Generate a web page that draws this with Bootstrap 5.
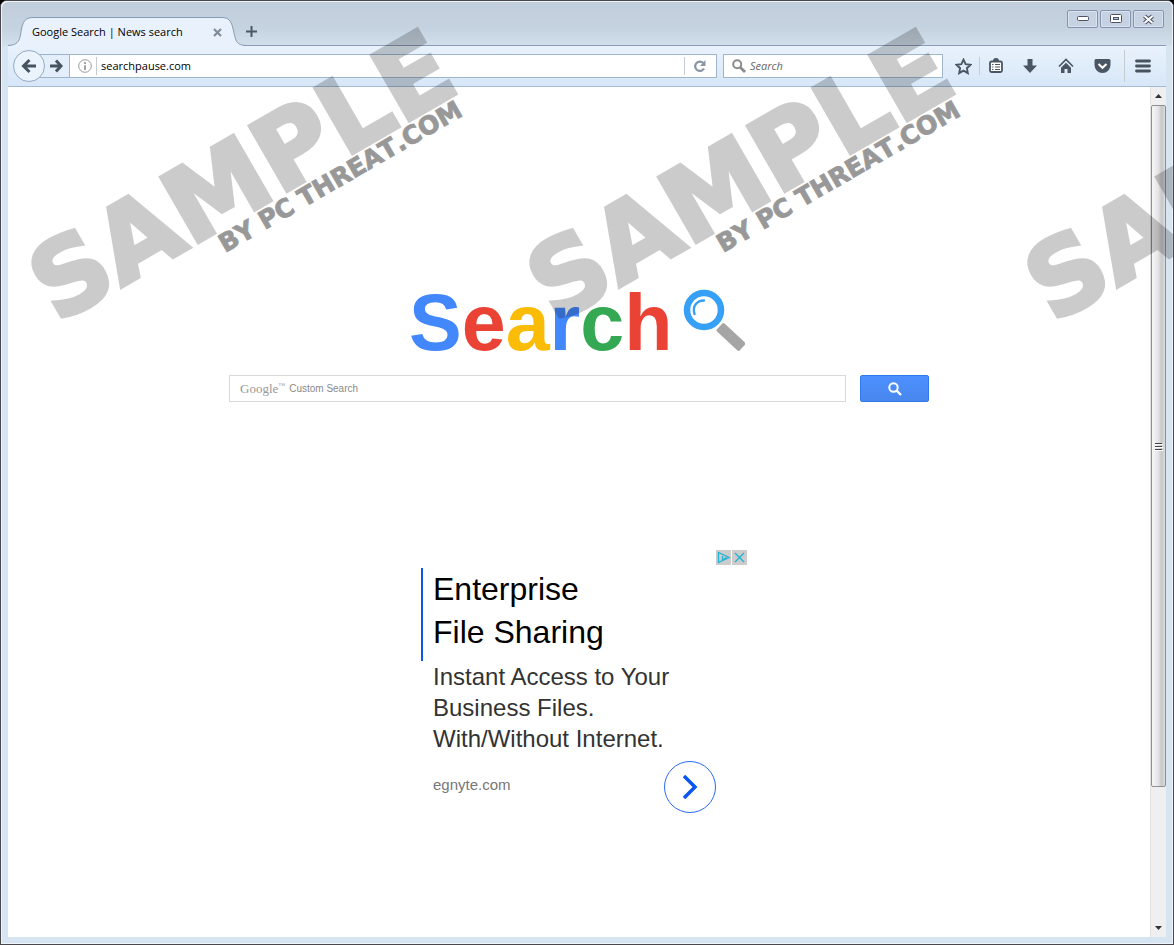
<!DOCTYPE html>
<html lang="en">
<head>
<meta charset="utf-8">
<meta name="viewport" content="width=device-width, initial-scale=1">
<title>Google Search | News search</title>
<link href="https://cdn.jsdelivr.net/npm/bootstrap@5.3.0/dist/css/bootstrap.min.css" rel="stylesheet">
<style>
  body { background: #000; font-family: "Liberation Sans", Arial, sans-serif; }
  button { line-height: 1; }
  svg { display: block; flex: none; }
  .win { border: 1px solid #4a484c; border-radius: 7px 7px 0 0; background: #d7e4f2; box-shadow: inset 0 0 0 1px #eef4fa; padding: 0 7px 7px; }
  .chrome-font { font-family: "Open Sans", "Noto Sans", sans-serif; font-size: 11px; line-height: 16px; color: #000; }
  .titlebar { height: 45px; margin: 0 -7px; padding: 1px 7px 0; border-radius: 6px 6px 0 0; background: linear-gradient(#c1cddb, #c5d2df 60%, #d2e0ed); box-shadow: inset 1px 1px 0 #eef4fa, inset -1px 0 0 #eef4fa; }
  .strip-line { border-bottom: 1px solid #8c9cb5; height: 44px; }
  .tab-row { height: 29px; margin-bottom: -1px; }
  .tab-mid { width: 190px; background: #e8f1fc; border-top: 1px solid #8a9bb0; }
  .plain { background: none; border: 0; padding: 0; display: flex; align-items: center; justify-content: center; }
  .winbtns { gap: 2px; margin-right: 2px; }
  .winbtn { width: 31px; height: 18px; border: 1px solid #8592b0; border-radius: 2px; background: #c6d2e2; box-shadow: inset 0 0 0 1px #d9e3ef; }
  .toolbar { height: 41px; background: linear-gradient(#e9f2fc, #d7e7f8); border-bottom: 1px solid #a3bad3; padding: 0 5px; }
  .back { width: 32px; height: 32px; border: 1px solid #95a9c0; border-radius: 50%; background: #ebf4fd; z-index: 1; }
  .fwd { width: 31px; height: 24px; margin-left: -6px; padding-left: 4px; border: 1px solid #9fb5cc; border-left: 0; background: #e3eefa; }
  .field { height: 24px; border: 1px solid #a0b6cd; background: #fff; }
  .field input, .query input { border: 0; outline: 0; background: transparent; padding: 0; min-width: 0; }
  .find { width: 220px; margin-left: 6px; }
  .find input::placeholder { font-style: italic; color: #666; opacity: 1; }
  .rule { width: 1px; height: 18px; background: #c6cbd2; }
  .rule-tall { height: 32px; }
  .tool { width: 36px; height: 32px; }
  .tool-slim { width: 32px; }
  .viewport { background: #fff; }
  .scroll { width: 16px; background: #efefef; border-left: 1px solid #e3e3e3; }
  .arrow { height: 18px; }
  .thumb { flex: 682; border: 1px solid #8f8f8f; border-radius: 2px; background: linear-gradient(90deg, #f6f6f6, #e6e6e8 45%, #c6c7ca 75%, #dcdcde); }
  .rest { flex: 132; }
  .column { max-width: 700px; padding-top: 188px; }
  .logo { font-size: 79px; line-height: 96px; }
  .unit { width: 336px; }
  .unit-logo { width: 340px; }
  .c-blue { color: #4387fd; } .c-red { color: #ea4335; } .c-gold { color: #fbbc05; } .c-green { color: #34a853; }
  .query { height: 27px; border: 1px solid #d9d9d9; padding-left: 10px; }
  .brand { font-family: "Liberation Serif", serif; font-size: 13px; color: #999; line-height: 20px; }
  .brand sup { font-size: 7px; top: -5px; }
  .query input { font-size: 10px; }
  .query input::placeholder { color: #8a8a8a; opacity: 1; }
  .go { width: 69px; height: 27px; margin-left: 14px; background: linear-gradient(#4d90fe, #4787ed); border: 1px solid #3079ed; border-radius: 2px; }
  .offer { margin-top: 148px; }
  .mini { width: 15px; height: 15px; background: #ccc; }
  .mini-gap { gap: 1px; }
  .headline { border-left: 2px solid #0a56f0; margin: 3px 0 0 10px; padding-left: 10px; height: 93px; font-size: 32px; line-height: 43px; color: #000; }
  .copy { padding-left: 22px; font-size: 24px; line-height: 31px; color: #333; }
  .site { font-size: 15px; color: #777; text-decoration: none; }
  .foot { padding: 7px 31px 0 22px; }
  .round { width: 52px; height: 52px; border: 1px solid #2a6af0; border-radius: 50%; background: #fff; }
  .marks { inset: 0; pointer-events: none; overflow: hidden; }
  .marks svg { overflow: visible; }
  .marks text { font-family: "DejaVu Sans", sans-serif; font-weight: bold; font-kerning: none; stroke: #000; stroke-linejoin: miter; }
  .mark-big { font-size: 103px; stroke-width: 4px; }
  .mark-sub { font-size: 25px; stroke-width: 1px; }
</style>
</head>
<body>
<div class="win min-vh-100 d-flex flex-column position-relative">
  <header class="titlebar chrome-font">
    <div class="strip-line d-flex align-items-end justify-content-between">
      <div class="d-flex align-items-end">
        <div class="tab-row d-flex">
          <svg width="24" height="29" viewBox="0 0 24 29"><path d="M0 28.500C9 28 11 25 12.500 18C14 8 15 1 24 .5V29H0z" fill="#e8f1fc"/><path d="M0 28.500C9 28 11 25 12.500 18C14 8 15 1 24 .5" fill="none" stroke="#8a9bb0"/></svg>
          <div class="tab-mid d-flex align-items-center justify-content-between">
            <span>Google Search | News search</span>
            <button class="plain" aria-label="Close tab"><svg width="9" height="9" viewBox="0 0 9 9"><path d="M1 1l7 7M8 1L1 8" stroke="#7f8c9b" stroke-width="2.200"/></svg></button>
          </div>
          <svg width="24" height="29" viewBox="0 0 24 29"><path d="M0 .5C9 .5 10 7 12 16C14 25 15 28 24 28.500V29H0z" fill="#e8f1fc"/><path d="M0 .5C9 .5 10 7 12 16C14 25 15 28 24 28.500" fill="none" stroke="#8a9bb0"/></svg>
        </div>
        <button class="plain pb-2" aria-label="New tab"><svg width="11" height="11" viewBox="0 0 11 11"><path d="M5.500 0v11M0 5.500h11" stroke="#4b5967" stroke-width="2"/></svg></button>
      </div>
      <div class="winbtns d-flex align-self-start mt-2">
        <button class="plain winbtn" aria-label="Minimize"><svg width="12" height="6" viewBox="0 0 12 6"><rect x=".5" y=".5" width="11" height="4" rx="1" fill="#fff" stroke="#4e5363"/></svg></button>
        <button class="plain winbtn" aria-label="Maximize"><svg width="12" height="10" viewBox="0 0 12 10"><rect x=".5" y=".5" width="11" height="8" rx="1" fill="#fff" stroke="#4e5363"/><rect x="3.500" y="3.500" width="5" height="2" fill="#b7c4d6" stroke="#4e5363"/></svg></button>
        <button class="plain winbtn" aria-label="Close"><svg width="13" height="11" viewBox="0 0 13 11"><path d="M2.500 2l8 7M10.500 2l-8 7" stroke="#4e5363" stroke-width="4.200"/><path d="M2.500 2l8 7M10.500 2l-8 7" stroke="#fff" stroke-width="2"/></svg></button>
      </div>
    </div>
  </header>

  <nav class="toolbar chrome-font d-flex align-items-center" aria-label="Browser toolbar">
    <button class="plain back position-relative" aria-label="Back"><svg width="16" height="16" viewBox="0 0 16 16"><path d="M8.500 2L2.500 8l6 6M3 8h12" fill="none" stroke="#47535f" stroke-width="3"/></svg></button>
    <button class="plain fwd" aria-label="Forward"><svg width="13" height="14" viewBox="0 0 13 14"><path d="M6 1.500L11 7l-5 5.500M11 7H0" fill="none" stroke="#47535f" stroke-width="3"/></svg></button>
    <div class="field flex-grow-1 d-flex align-items-center border-start-0 ps-2">
      <svg width="14" height="14" viewBox="0 0 14 14"><circle cx="7" cy="7" r="6.300" fill="none" stroke="#999"/><path d="M7 3v2M7 6.200V11" stroke="#999" stroke-width="1.800"/></svg>
      <span class="rule ms-1 me-1"></span>
      <input class="flex-grow-1" type="text" value="searchpause.com" aria-label="Address">
      <span class="rule me-2"></span>
      <button class="plain me-2" aria-label="Reload"><svg width="15" height="14" viewBox="0 0 15 14"><path d="M11 9.500A4.700 4.700 0 1 1 10.300 4" fill="none" stroke="#8795a5" stroke-width="2.200"/><path d="M12.500 1v6H7z" fill="#8795a5"/></svg></button>
    </div>
    <label class="field find d-flex align-items-center ps-1">
      <svg class="ms-1 me-1" width="14" height="14" viewBox="0 0 14 14"><circle cx="5.200" cy="5.200" r="4" fill="none" stroke="#8b8b8b" stroke-width="2"/><path d="M8.200 8.200L13 13" stroke="#8b8b8b" stroke-width="2.800"/></svg>
      <input class="flex-grow-1" type="text" placeholder="Search" aria-label="Search the web">
    </label>
    <div class="d-flex align-items-center ms-1">
      <button class="plain tool tool-slim" aria-label="Bookmark"><svg width="17" height="17" viewBox="0 0 17 17"><path d="M8.500 1.700l2.100 4.500 4.900.6-3.600 3.400.9 4.900-4.300-2.400-4.300 2.400.9-4.900L1.500 6.800l4.900-.6z" fill="none" stroke="#4a5663" stroke-width="1.900"/></svg></button>
      <span class="rule"></span>
      <button class="plain tool tool-slim" aria-label="Bookmarks list"><svg width="16" height="16" viewBox="0 0 16 16"><path d="M5 3a3 3 0 0 1 6 0z" fill="#4a5663"/><rect x="2" y="3.500" width="12" height="10.500" rx="1.500" fill="#fff" stroke="#4a5663" stroke-width="1.800"/><path d="M4 6.500h1.500M7 6.500h5M4 9h1.500M7 9h5M4 11.500h1.500M7 11.500h5" stroke="#4a5663" stroke-width="1.100"/></svg></button>
      <button class="plain tool" aria-label="Downloads"><svg width="14" height="16" viewBox="0 0 14 16"><path d="M4.500 1h5v6.500H14L7 15 0 7.500h4.500z" fill="#4a5663"/></svg></button>
      <button class="plain tool" aria-label="Home"><svg width="16" height="16" viewBox="0 0 16 16"><path d="M1 8.500l7-7 7 7" fill="none" stroke="#4a5663" stroke-width="1.600"/><path d="M3 9.800l5-5 5 5V15H9.500v-4h-3v4H3z" fill="#4a5663"/></svg></button>
      <button class="plain tool" aria-label="Pocket"><svg width="17" height="16" viewBox="0 0 17 16"><path d="M2 1h13q1.500 0 1.500 1.500V7a8 8 0 0 1-16 0V2.500Q.5 1 2 1z" fill="#4a5663"/><path d="M4.500 6l4 3.800 4-3.800" fill="none" stroke="#fff" stroke-width="2"/></svg></button>
      <span class="rule rule-tall ms-1"></span>
      <button class="plain tool" aria-label="Menu"><svg width="16" height="14" viewBox="0 0 16 14"><path d="M1.500 2h13M1.500 7h13M1.500 12h13" stroke="#47535f" stroke-width="2.800" stroke-linecap="round"/></svg></button>
    </div>
  </nav>

  <div class="viewport flex-grow-1 d-flex">
    <main class="flex-grow-1">
      <div class="column mx-auto">
        <div class="unit-logo mx-auto d-flex align-items-start">
          <h1 class="logo fw-bold m-0" aria-label="Search"><span class="c-blue">S</span><span class="c-red">e</span><span class="c-gold">a</span><span class="c-blue">r</span><span class="c-green">c</span><span class="c-red">h</span></h1>
          <svg class="mt-2 ms-2" width="64" height="70" viewBox="0 0 64 70"><rect x="-15.500" y="-5.500" width="31" height="11" rx="1.500" transform="translate(50 54) rotate(43)" fill="#a5a5a5"/><circle cx="23" cy="27" r="17" fill="#fff" stroke="#35a0f5" stroke-width="6.500"/><path d="M13.500 31C11 23 16 17.500 23 17.500" fill="none" stroke="#35a0f5" stroke-width="2.400" stroke-linecap="round"/></svg>
        </div>
        <form class="d-flex mt-1" onsubmit="return false">
          <label class="query flex-grow-1 d-flex align-items-center">
            <span class="brand">Google<sup>™</sup></span>
            <input class="flex-grow-1 ms-1" type="text" placeholder="Custom Search" aria-label="Custom search">
          </label>
          <button class="plain go" type="submit" aria-label="Search"><svg width="14" height="14" viewBox="0 0 14 14"><circle cx="5.500" cy="5.500" r="4.200" fill="none" stroke="#fff" stroke-width="2"/><path d="M8.500 8.500L13 13" stroke="#fff" stroke-width="2.400"/></svg></button>
        </form>
        <section class="unit offer mx-auto" aria-label="Advertisement">
          <div class="mini-gap d-flex justify-content-end">
            <button class="plain mini" aria-label="Ad choices"><svg width="13" height="13" viewBox="0 0 13 13"><path d="M1.500 1.500L12 6.500l-10.500 5zM5.500 5v4l4-2.500" fill="none" stroke="#20b3d3" stroke-width="1.300"/></svg></button>
            <button class="plain mini" aria-label="Close ad"><svg width="11" height="11" viewBox="0 0 11 11"><path d="M1 1l9 9M10 1l-9 9" stroke="#20b3d3" stroke-width="1.400"/></svg></button>
          </div>
          <h2 class="headline fw-normal mb-0">Enterprise<br>File Sharing</h2>
          <p class="copy m-0">Instant Access to Your<br>Business Files.<br>With/Without Internet.</p>
          <div class="foot d-flex align-items-center justify-content-between">
            <a class="site pb-1" href="#">egnyte.com</a>
            <button class="plain round" aria-label="Open"><svg width="18" height="26" viewBox="0 0 18 26"><path d="M3 2l11 11L3 24" fill="none" stroke="#0a56f0" stroke-width="3.500"/></svg></button>
          </div>
        </section>
      </div>
    </main>
    <div class="scroll d-flex flex-column" aria-hidden="true">
      <div class="arrow d-flex align-items-center justify-content-center"><svg width="7" height="4" viewBox="0 0 7 4"><path d="M0 4l3.500-4L7 4z" fill="#333"/></svg></div>
      <div class="thumb d-flex align-items-center justify-content-center"><svg width="8" height="9" viewBox="0 0 8 9"><path d="M0 1.500h7M0 4.500h7M0 7.500h7" stroke="#444"/><path d="M0 2.500h8M0 5.500h8M0 8.500h8" stroke="#fff"/></svg></div>
      <div class="rest"></div>
      <div class="arrow d-flex align-items-center justify-content-center"><svg width="7" height="4" viewBox="0 0 7 4"><path d="M0 0l3.500 4L7 0z" fill="#333"/></svg></div>
    </div>
  </div>

  <div class="marks position-absolute d-flex z-2" aria-hidden="true">
    <svg width="498" height="340" viewBox="0 0 498 340"><g opacity=".2"><text class="mark-big" transform="translate(56 323) rotate(-30)">SAMPLE</text></g><g opacity=".4"><text class="mark-sub" transform="translate(224 252) rotate(-30)">BY PC THREAT.COM</text></g></svg>
    <svg width="498" height="340" viewBox="0 0 498 340"><g opacity=".2"><text class="mark-big" transform="translate(56 323) rotate(-30)">SAMPLE</text></g><g opacity=".4"><text class="mark-sub" transform="translate(224 252) rotate(-30)">BY PC THREAT.COM</text></g></svg>
    <svg width="498" height="340" viewBox="0 0 498 340"><g opacity=".2"><text class="mark-big" transform="translate(56 323) rotate(-30)">SAMPLE</text></g></svg>
  </div>
</div>
<script src="https://cdn.jsdelivr.net/npm/bootstrap@5.3.0/dist/js/bootstrap.bundle.min.js"></script>
</body>
</html>
